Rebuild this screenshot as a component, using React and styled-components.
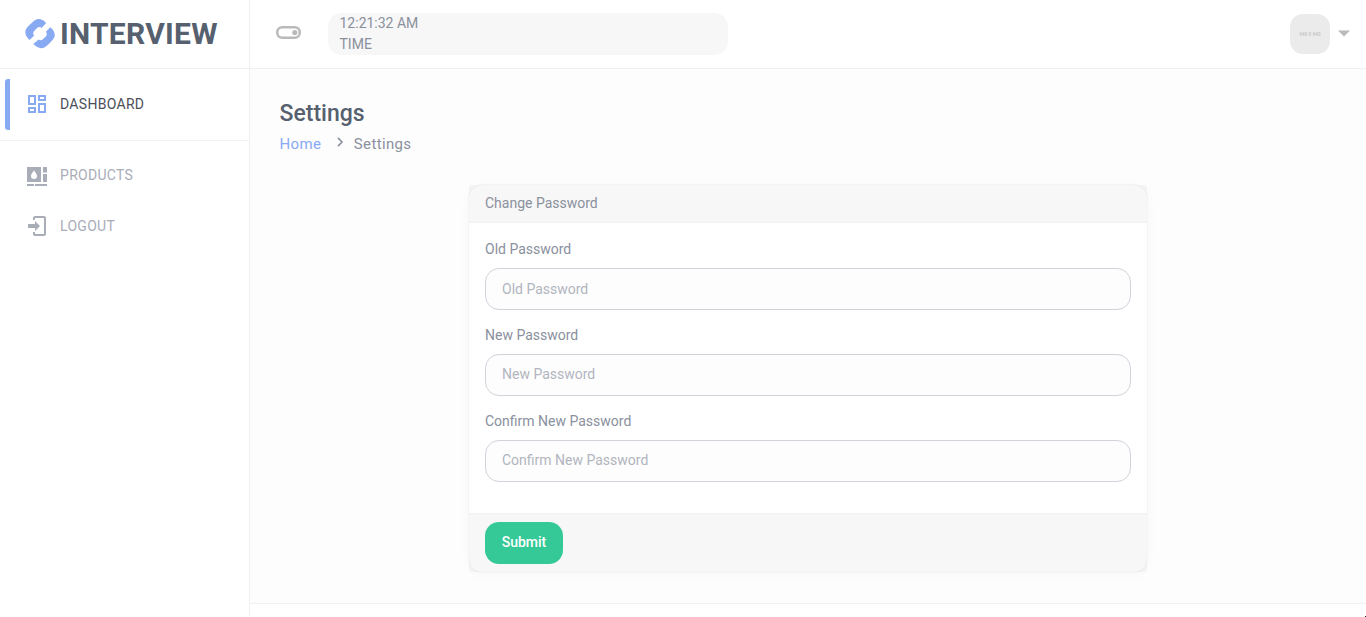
import React from "react";
import styled, { createGlobalStyle } from "styled-components";

const GlobalStyle = createGlobalStyle`
  *, *::before, *::after { box-sizing: border-box; }
  html, body { margin: 0; height: 617px; overflow: hidden; background: #fff; }
  body { font-family: Roboto, "Liberation Sans", sans-serif; font-size: 14px; line-height: 21px; color: #8a909d; }
`;

const Page = styled.div`
  display: flex;
  height: 617px;
  position: relative;
`;
const Corner = styled.span`
  position: absolute;
  right: 0;
  bottom: 0;
  width: 1px;
  height: 1px;
  background: #222;
`;
const Sidebar = styled.aside`
  width: 250px;
  height: 616px;
  flex: none;
  border-right: 1px solid #f0f0f0;
`;
const Brand = styled.div`
  height: 69px;
  border-bottom: 1px solid #f0f0f0;
  padding: 0 0 1px 25px;
  display: flex;
  align-items: center;
  gap: 5px;
`;
const BrandName = styled.span`
  font-size: 30px;
  line-height: 36px;
  font-weight: 700;
  color: #56606e;
  letter-spacing: 0.25px;
`;
const Menu = styled.nav`
  display: flex;
  flex-direction: column;
`;
const MenuGroup = styled.div`
  padding: ${(p) => (p.$divided ? "10px 0 10px 5px" : "9px 0 0 5px")};
  border-bottom: ${(p) => (p.$divided ? "1px solid #f3f3f3" : "0")};
`;
const MenuItem = styled.div`
  height: 51px;
  display: flex;
  align-items: center;
  gap: 11px;
  padding-left: 20px;
  font-size: 14px;
  letter-spacing: 0.3px;
  color: ${(p) => (p.$active ? "#4c4f58" : "#a9acb8")};
  background: ${(p) =>
    p.$active ? "linear-gradient(#88aaf3, #88aaf3) left / 5px 100% no-repeat" : "none"};
  border-radius: 3px;
  svg { color: ${(p) => (p.$active ? "#88aaf3" : "#a9adb8")}; flex: none; margin-bottom: 1px; }
`;
const Main = styled.main`
  flex: 1;
  display: flex;
  flex-direction: column;
`;
const Topbar = styled.header`
  height: 69px;
  border-bottom: 1px solid #f0f0f0;
  display: flex;
  align-items: center;
  padding: 0 16px 1px 26px;
`;
const Toggle = styled.svg`
  margin-top: -2px;
`;
const TimeBox = styled.div`
  width: 400px;
  height: 42px;
  border-radius: 14px;
  background: #f7f7f7;
  margin-left: 27px;
  padding-left: 11.5px;
  display: flex;
  flex-direction: column;
`;
const Account = styled.div`
  margin-left: auto;
  display: flex;
  align-items: center;
  gap: 8px;
`;
const Avatar = styled.div`
  width: 40px;
  height: 40px;
  border-radius: 13px;
  background: #ebebeb;
  color: #c0c0c0;
  font: 600 4.4px/40px "Open Sans", sans-serif;
  letter-spacing: 0.12px;
  text-align: center;
`;
const Content = styled.section`
  flex: 1;
  background: #fdfdfd;
  padding: 31px 30px 0;
`;
const Title = styled.h1`
  margin: 0 0 0 -0.5px;
  font-size: 23px;
  line-height: 28px;
  font-weight: 500;
  color: #56606e;
`;
const Crumbs = styled.div`
  display: flex;
  align-items: center;
  margin: 6px 0 0 -0.5px;
  font-size: 15px;
  letter-spacing: 0.36px;
  svg { margin: -5px 10px 0 14.5px; }
`;
const Home = styled.span`
  color: #88aaf3;
`;
const Card = styled.div`
  width: 680px;
  height: 389px;
  margin: 29px auto 0;
  display: flex;
  flex-direction: column;
  background: #fff;
  border: 1px solid #f4f4f4;
  border-radius: 14px;
  box-shadow: 0 2px 12px rgba(0, 0, 0, 0.025);
`;
const CardHeader = styled.div`
  height: 38px;
  padding: 8px 16px;
  background: rgba(0, 0, 0, 0.033);
  border-bottom: 1px solid #f2f2f2;
  border-radius: 3px 3px 0 0;
`;
const CardBody = styled.div`
  flex: 1;
  padding: 16px 16px 0;
`;
const Field = styled.label`
  display: block;
  height: 86px;
`;
const Label = styled.span`
  display: block;
  height: 29px;
`;
const Input = styled.input`
  display: block;
  width: 100%;
  height: 42px;
  border: 1px solid #d0d3da;
  border-radius: 14px;
  background: #fdfdfd;
  padding: 0 16px ${(p) => (p.$raised ? "2px" : "0")};
  font: 14px/21px Roboto, "Liberation Sans", sans-serif;
  &::placeholder { color: #b1b5be; opacity: 1; }
`;
const CardFooter = styled.div`
  height: 59px;
  padding: 8px 16px;
  background: rgba(0, 0, 0, 0.033);
  border-top: 1px solid #f2f2f2;
  border-radius: 0 0 3px 3px;
`;
const Submit = styled.button`
  display: block;
  width: 78px;
  height: 42px;
  border: 0;
  border-radius: 14px;
  padding: 0 0 2px;
  background: #35c998;
  color: #fff;
  font: 500 14px/21px Roboto, sans-serif;
`;
const Footer = styled.footer`
  height: 14px;
  border-top: 1px solid #f1f1f1;
  background: #fff;
`;

const Logo = () => (
  <svg width="30" height="30" viewBox="0 0 30 30" fill="#88aaf3">
    <path d="M4.6 21C1.2 18.2 -.9 14.2 1 10.3C1.7 8.9 3.5 7.1 5.5 5.1C7.8 2.8 10 .7 12.3.3C15.4-.4 18.4 1 21.2 4.2L16.4 8.9C15 7.6 13.2 8 11.8 9.3L9.2 11.9C7.8 13.3 8 15.2 9.2 16.5Z" />
    <path d="M25.4 8.3C28.8 11.1 30.9 15.1 29 19C28.3 20.4 26.5 22.2 24.5 24.2C22.2 26.5 20 28.6 17.7 29C14.6 29.7 11.6 28.3 8.3 25.1L13.6 20.4C15 21.7 16.8 21.3 18.2 20L20.8 17.4C22.2 16 22 14.1 20.8 12.8Z" />
  </svg>
);
const Icon = ({ children }) => (
  <svg width="24" height="24" viewBox="0 0 24 24" fill="currentColor">{children}</svg>
);

const fields = ["Old Password", "New Password", "Confirm New Password"];

export default function App() {
  return (
    <>
      <GlobalStyle />
      <Page>
        <Sidebar>
          <Brand>
            <Logo />
            <BrandName>INTERVIEW</BrandName>
          </Brand>
          <Menu>
            <MenuGroup $divided>
              <MenuItem $active>
                <Icon>
                  <path d="M19 5V7H15V5H19M9 5V11H5V5H9M19 13V19H15V13H19M9 17V19H5V17H9M21 3H13V9H21V3M11 3H3V13H11V3M21 11H13V21H21V11M11 15H3V21H11V15Z" />
                </Icon>
                DASHBOARD
              </MenuItem>
            </MenuGroup>
            <MenuGroup>
              <MenuItem>
                <Icon>
                  <path fillRule="evenodd" d="M2 4H16V19H2ZM9 7.2C8 9 6 11 6 13A3 3 0 0 0 12 13C12 11 10 9 9 7.2ZM18 4H22V9.5H18ZM18 11H22V19H18ZM2 21H9V23H2ZM10 21H22V23H10Z" />
                </Icon>
                PRODUCTS
              </MenuItem>
              <MenuItem>
                <Icon>
                  <path d="M10 2H19C20.1 2 21 2.9 21 4V20C21 21.1 20.1 22 19 22H10C8.9 22 8 21.1 8 20V18H10V20H19V4H10V6H8V4C8 2.9 8.9 2 10 2ZM3 10H10V7L15 12L10 17V14H3Z" />
                </Icon>
                LOGOUT
              </MenuItem>
            </MenuGroup>
          </Menu>
        </Sidebar>
        <Main>
          <Topbar>
            <Toggle width="25" height="13" viewBox="0 0 25 13">
              <rect x="1.25" y="1.25" width="22.5" height="10.5" rx="5" fill="none" stroke="#bababa" strokeWidth="2.5" />
              <circle cx="18.8" cy="6.5" r="2.6" fill="#bababa" />
            </Toggle>
            <TimeBox>
              <span>12:21:32 AM</span>
              <span>TIME</span>
            </TimeBox>
            <Account>
              <Avatar>640 X 640</Avatar>
              <svg width="12" height="7" viewBox="0 0 12 7">
                <path d="M0 .5H12L6 6.5Z" fill="#bababa" />
              </svg>
            </Account>
          </Topbar>
          <Content>
            <Title>Settings</Title>
            <Crumbs>
              <Home>Home</Home>
              <svg width="8" height="10" viewBox="0 0 8 10" fill="none" stroke="#8a909d" strokeWidth="1.6">
                <path d="M2 .9L6 5L2 9.1" />
              </svg>
              Settings
            </Crumbs>
            <Card>
              <CardHeader>Change Password</CardHeader>
              <CardBody>
                {fields.map((name, i) => (
                  <Field key={name}>
                    <Label>{name}</Label>
                    <Input type="password" placeholder={name} $raised={i > 0} />
                  </Field>
                ))}
              </CardBody>
              <CardFooter>
                <Submit type="button">Submit</Submit>
              </CardFooter>
            </Card>
          </Content>
          <Footer />
        </Main>
        <Corner />
      </Page>
    </>
  );
}
